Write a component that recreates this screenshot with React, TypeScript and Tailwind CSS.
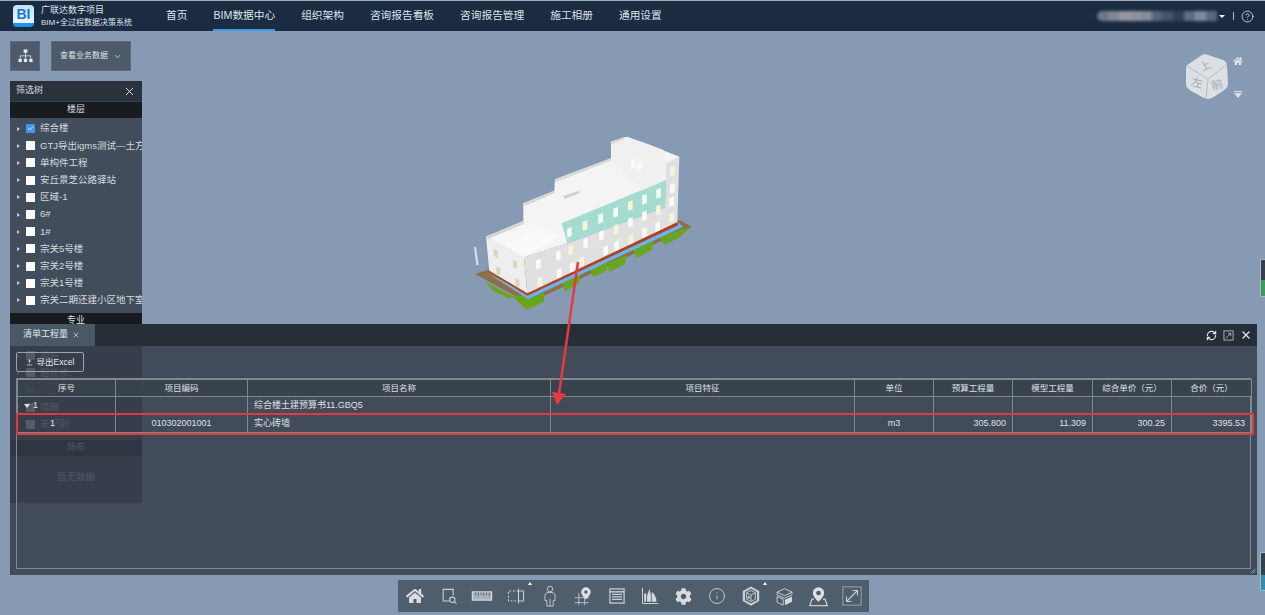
import { FaCog, FaHome } from 'react-icons/fa'
import { Check, ChevronDown, CircleHelp, Info, RefreshCw, X } from 'lucide-react'

const navItems = ['首页', 'BIM数据中心', '组织架构', '咨询报告看板', '咨询报告管理', '施工相册', '通用设置']

const floors = ['综合楼', 'GTJ导出igms测试—土方', '单构件工程', '安丘景芝公路驿站', '区域-1', '6#', '1#', '宗关5号楼', '宗关2号楼', '宗关1号楼', '宗关二期还建小区地下室']
const majors = ['钢筋', '粗装修', '其他', '措施', '未识别']

const blurColors = ['#6d7888', '#7f8896', '#9a95a3', '#8d93a0', '#858d9a', '#56657a', '#45556c', '#2f405a', '#5f6e84', '#808c9c', '#5a6980']

const windows = [
  [265, 432], [270, 485], [325, 407], [328, 460], [362, 390], [367, 442], [407, 370], [395, 425], [454, 347], [467, 392],
  [498, 328], [500, 378], [541, 307], [543, 358], [583, 288], [583, 338], [625, 270], [623, 320], [358, 337], [405, 317],
  [452, 295], [497, 277], [541, 257], [583, 238], [626, 220], [667, 153], [667, 205], [665, 245], [665, 293], [550, 130], [568, 137],
]
const sideWindows = [[137, 400], [145, 453], [195, 433], [202, 488]]

const Building = () => (
  <svg viewBox="0 0 780 600" className="absolute left-[450px] top-[89px] h-[200px] w-[260px]">
    <polygon points="72,382 78,380 86,434 79,436" fill="#d9dde0" />
    <polygon points="75,462 118,448 690,300 725,320 235,550" fill="#8f6f48" />
    <polygon points="108,486 190,530 180,538 125,510" fill="#6aa51f" />
    <polygon points="186,528 282,520 282,545 230,570" fill="#6aa51f" />
    <polygon points="335,485 392,462 388,490 345,514" fill="#6aa51f" />
    <polygon points="420,445 472,425 470,452 428,472" fill="#6aa51f" />
    <polygon points="472,430 530,405 525,432 478,456" fill="#6aa51f" />
    <polygon points="548,385 612,358 605,390 560,414" fill="#6aa51f" />
    <polygon points="628,352 690,330 725,320 680,358 642,374" fill="#6aa51f" />
    <polygon points="112,460 235,537 700,320 680,305 232,520" fill="#6cb2ee" />
    <polygon points="118,456 232,527 684,316 682,306 232,518 120,450" fill="#b3421c" />
    {/* silhouette behind the roofs */}
    <polygon points="108,350 220,303 220,250 313,212 315,178 483,115 483,65 530,50 600,75 688,110 648,180 352,370 222,412" fill="#f4f4f4" />
    <polygon points="108,350 222,412 232,520 118,452" fill="#eeeeee" />
    <polygon points="222,412 352,370 645,262 648,128 688,110 682,306 232,520" fill="#e0e0e0" />
    <polygon points="335,310 648,180 645,262 352,370" fill="#a5dcd2" />
    <polygon points="108,350 222,303 335,345 222,412" fill="#f6f6f6" />
    <polygon points="483,65 530,50 600,75 640,90 648,130 648,180 578,210 483,120" fill="#f0f0f0" />
    <polygon points="165,375 250,330 335,345 222,412" fill="#fafafa" />
    <polygon points="108,350 222,303 222,312 112,358" fill="#d5d5d5" />
    <polygon points="220,250 313,212 313,220 224,258" fill="#d8d8d8" />
    <polygon points="315,178 483,115 483,122 318,186" fill="#d8d8d8" />
    <polygon points="340,228 388,212 390,220 344,236" fill="#cfcfcf" />
    <polygon points="483,65 522,52 522,58 486,72" fill="#d8d8d8" />
    {windows.map(([x, y], i) => (
      <polygon key={i} points={`${x - 7},${y - 11} ${x + 7},${y - 16} ${x + 7},${y + 11} ${x - 7},${y + 16}`} fill={i % 3 === 1 ? '#f5f3d8' : '#fafaf4'} />
    ))}
    {sideWindows.map(([x, y], i) => (
      <polygon key={i} points={`${x - 6},${y - 14} ${x + 6},${y - 8} ${x + 6},${y + 14} ${x - 6},${y + 8}`} fill="#d8d6b8" />
    ))}
  </svg>
)

const NavCube = () => (
  <svg viewBox="0 0 60 60" preserveAspectRatio="none" className="absolute right-[28px] top-[18px] h-[55px] w-[60px]">
    <path d="M30 6 L46 12 Q50 14 50 18 L51 38 Q51 42 47 45 L36 53 Q31 56 26 53 L13 45 Q9 42 9 38 L9 22 Q9 18 12 16 L24 7 Q27 5 30 6Z" fill="#dbe0e4" />
    <path d="M11 19 L31 33 L50 17 M31 33 L29 54" fill="none" stroke="#a9b2bb" strokeWidth="0.8" />
    <text x="30" y="22" fontSize="11" textAnchor="middle" fill="#a3abb3" transform="rotate(-25 30 22)">上</text>
    <text x="19" y="41" fontSize="12" textAnchor="middle" fill="#a3abb3" transform="rotate(15 19 41)">左</text>
    <text x="41" y="43" fontSize="12" textAnchor="middle" fill="#a3abb3" transform="rotate(-15 41 43)">前</text>
  </svg>
)

const ic = { className: 'h-[20px] w-[20px]', viewBox: '0 0 24 24', fill: 'none', stroke: '#c9ced3', strokeWidth: 1.3 }

const ToolIcons = [
  <FaHome key="home" className="h-[16px] w-[18px] text-[#d8dcdf]" />,
  <svg key="zoom" {...ic}>
    <path d="M17 11V4H5v14h7" />
    <circle cx="16" cy="16.5" r="3.2" />
    <path d="M18.5 19l2.5 2.5" />
  </svg>,
  <svg key="ruler" {...ic} className="h-[22px] w-[22px]">
    <rect x="1.500" y="7.500" width="21" height="9" fill="#aab2b9" stroke="#d5d9dd" strokeWidth="1.300" />
    <path d="M5 8v3M8 8v4M11 8v3M14 8v4M17 8v3M20 8v4" stroke="#4f5e6c" strokeWidth="0.900" />
  </svg>,
  <svg key="section" {...ic}>
    <path d="M15 6H3v12h12" strokeDasharray="2.4 2" />
    <path d="M15 3v18M15 6h6v12h-6" />
  </svg>,
  <svg key="person" {...ic} strokeWidth={1} className="h-[22px] w-[22px]">
    <circle cx="12" cy="4.500" r="3" />
    <path d="M6.500 11c0-2 2.300-3 5.500-3s5.500 1 5.500 3v6h-2v6h-7v-6h-2zM12 15v8" />
  </svg>,
  <svg key="pin" {...ic}>
    <path d="M2 14h17M2 20h17M7 8v15M14 13v10" strokeWidth="1" />
    <path d="M15.500 1.500a5.700 5.700 0 0 0-5.700 5.700c0 3.800 5.700 9 5.700 9s5.700-5.200 5.700-9a5.700 5.700 0 0 0-5.700-5.700zm0 3.700a2 2 0 1 1 0 4 2 2 0 0 1 0-4z" fill="#dde0e3" stroke="none" />
  </svg>,
  <svg key="table" {...ic}>
    <rect x="3.500" y="3.500" width="17" height="17" strokeWidth="1.500" />
    <path d="M3.500 7h17" strokeWidth="1.800" />
    <path d="M6 10h12M6 13h12M6 16h12" strokeWidth="1.500" />
  </svg>,
  <svg key="chart" {...ic}>
    <path d="M3 2v19h19" strokeWidth="1.200" />
    <path d="M5 19V9h2.500v10zM8.500 19V12L11 4l2 6v9zM14 19V7l3 3 2.500 5v4z" fill="#d5d9dd" stroke="none" />
  </svg>,
  <FaCog key="cog" className="h-[17px] w-[17px] text-[#d8dcdf]" />,
  <Info key="info" className="h-[18px] w-[18px] text-[#c9ced3]" strokeWidth={1.200} />,
  <svg key="cube" {...ic} className="h-[22px] w-[22px]">
    <path d="M12 1.500l9 5v11l-9 5-9-5v-11z" fill="#c9ced3" stroke="none" />
    <path d="M12 4l6.500 3.500v9L12 20l-6.500-3.500v-9z" fill="#4f5e6c" stroke="none" />
    <path d="M12 6l4.800 2.500v7L12 18l-4.800-2.500v-7zM7.200 8.500L12 11l4.800-2.500M12 11v7" strokeWidth="1" />
    <rect x="8.500" y="12" width="2" height="3" fill="#c9ced3" stroke="none" />
  </svg>,
  <svg key="box" {...ic} className="h-[21px] w-[21px]">
    <path d="M12 3l8.500 4v3L12 14 3.500 10V7zM3.500 7L12 11l8.500-4" strokeWidth="1.100" />
    <path d="M3.500 12l7 3.300V22l-7-3.500z" strokeWidth="1.100" />
    <path d="M20.500 12l-8 3.800V22l8-4z" fill="#d5d9dd" stroke="none" />
  </svg>,
  <svg key="mappin" {...ic} className="h-[21px] w-[21px]">
    <path d="M12 1.500a6.500 6.500 0 0 0-6.500 6.500c0 4.300 6.500 10 6.500 10s6.500-5.700 6.500-10A6.500 6.500 0 0 0 12 1.500zm0 3.800a2.700 2.700 0 1 1 0 5.400 2.700 2.700 0 0 1 0-5.400z" fill="#dde0e3" stroke="none" />
    <path d="M7 15H4.500L2 22.500h20L19.500 15H17" strokeWidth="1.400" />
  </svg>,
  <svg key="expand" {...ic} className="h-[22px] w-[22px]">
    <rect x="2" y="2" width="20" height="20" stroke="#8c98a4" strokeWidth="1.300" />
    <path d="M6 18L18 6M12.500 6H18v5.500M6 12.500V18h5.500" strokeWidth="1.200" />
  </svg>,
]

const FilterRow = ({ label, checked }: { label: string; checked?: boolean }) => (
  <div className="flex h-[17.2px] items-center whitespace-nowrap pl-[7px] text-[9.500px] text-[#d6dade]">
    <span className="mr-[6px] h-0 w-0 border-y-[2.500px] border-l-[3px] border-y-transparent border-l-[#c3c8cd]" />
    {checked ? (
      <span className="mr-[5px] flex h-[9px] w-[9px] shrink-0 items-center justify-center bg-[#3f97ef]">
        <Check className="h-[7px] w-[7px] text-white" strokeWidth={3} />
      </span>
    ) : (
      <span className="mr-[5px] h-[9px] w-[9px] shrink-0 bg-white" />
    )}
    {label}
  </div>
)

const SectionHead = ({ label }: { label: string }) => (
  <div className="flex h-[16px] items-center justify-center bg-[#181c20] text-[9px] text-[#d8dcdf]">{label}</div>
)

const FilterTree = () => (
  <div className="mt-[10px] flex h-[422px] w-[132px] flex-col overflow-hidden bg-[#3e4957]/95">
    <div className="flex h-[21px] shrink-0 items-center justify-between border-b border-[#3a424c] bg-[#2a323b] px-[6px] text-[9px] text-[#d8dcdf]">
      筛选树
      <X className="h-[13px] w-[13px] text-white" strokeWidth={1.500} />
    </div>
    <SectionHead label="楼层" />
    <div className="pb-[4px] pt-[2px]">
      {floors.map((f, i) => (
        <FilterRow key={f} label={f} checked={i === 0} />
      ))}
    </div>
    <SectionHead label="专业" />
    <div className="pb-[7px] pt-[18px]">
      {majors.map((m) => (
        <FilterRow key={m} label={m} />
      ))}
    </div>
    <SectionHead label="场布" />
    <div className="pt-[14px] text-center text-[9.500px] text-[#d6dade]">暂无数据</div>
  </div>
)

const cell = 'h-[18px] border border-[#7f8a90] px-[6px] text-[9px] text-[#dfe2e5]'
const head = 'h-[17px] border border-[#7f8a90] bg-[#38424c]/90 text-center text-[8.500px] font-normal text-[#dfe2e5]'

const columns = ['序号', '项目编码', '项目名称', '项目特征', '单位', '预算工程量', '模型工程量', '综合单价（元）', '合价（元）']
const widths = ['w-[98px]', 'w-[132px]', 'w-[303px]', 'w-[304px]', 'w-[79px]', 'w-[79px]', 'w-[80px]', 'w-[79px]', 'w-[80px]']

const QuantityTable = () => (
  <div className="mt-[6px] h-[191px] border border-[#7f8a90]">
    <table className="w-full table-fixed border-collapse">
      <colgroup>
        {widths.map((w, i) => (
          <col key={i} className={w} />
        ))}
      </colgroup>
      <thead>
        <tr>
          {columns.map((c) => (
            <th key={c} className={head}>{c}</th>
          ))}
        </tr>
      </thead>
      <tbody>
        <tr>
          <td className={cell}>
            <span className="inline-flex items-center gap-[3px]">
              <span className="h-0 w-0 border-x-[3.500px] border-t-[4px] border-x-transparent border-t-[#dfe2e5]" />
              1
            </span>
          </td>
          <td className={cell} />
          <td className={cell}>综合楼土建预算书11.GBQ5</td>
          <td className={cell} />
          <td className={cell} />
          <td className={cell} />
          <td className={cell} />
          <td className={cell} />
          <td className={cell} />
        </tr>
        <tr>
          <td className={`${cell} pl-[32px]`}>1</td>
          <td className={`${cell} text-center`}>010302001001</td>
          <td className={cell}>实心砖墙</td>
          <td className={cell} />
          <td className={`${cell} text-center`}>m3</td>
          <td className={`${cell} text-right`}>305.800</td>
          <td className={`${cell} text-right`}>11.309</td>
          <td className={`${cell} text-right`}>300.25</td>
          <td className={`${cell} text-right`}>3395.53</td>
        </tr>
      </tbody>
    </table>
  </div>
)

const BottomPanel = () => (
  <div className="absolute left-[10px] top-[293px] h-[251px] w-[1247px] bg-[#343c48]/[0.84]">
    <div className="flex h-[22px] items-stretch justify-between bg-[#262e38]">
      <div className="flex w-[85px] items-center gap-[4px] bg-[#4a5866] pl-[13px] text-[9px] text-[#e3e6e9]">
        清单工程量
        <X className="h-[8px] w-[8px]" />
      </div>
      <div className="flex items-center gap-[6px] pr-[5px] text-[#e3e6e9]">
        <RefreshCw className="h-[11px] w-[11px]" strokeWidth={2.500} />
        <svg viewBox="0 0 12 12" className="h-[11px] w-[11px]" fill="none" stroke="#aeb5bb" strokeWidth="1">
          <rect x="1" y="1" width="10" height="10" />
          <path d="M3 9l5-5M5.500 3.500H8.500V6.500" />
        </svg>
        <X className="h-[12px] w-[12px]" strokeWidth={2.500} />
      </div>
    </div>
    <div className="px-[6px] pt-[6px]">
      <button className="flex h-[20px] w-[68px] items-center justify-center gap-[4px] rounded-[2px] border border-[#9aa3ab] text-[8.500px] text-[#e3e6e9]">
        <svg viewBox="0 0 10 10" className="h-[7px] w-[7px]" fill="none" stroke="#e3e6e9" strokeWidth="1">
          <path d="M5 1v5M3 3.500L5 1l2 2.500M1 8.500h8" />
        </svg>
        导出Excel
      </button>
      <QuantityTable />
    </div>
    <svg viewBox="0 0 8 8" className="absolute bottom-[1px] right-[1px] h-[6px] w-[6px]" stroke="#aeb5bb" strokeWidth="1">
      <path d="M1 7l6-6M4 7l3-3M7 7v0" />
    </svg>
  </div>
)

export default function App() {
  return (
    <div className="relative flex h-[615px] w-[1265px] flex-col overflow-hidden bg-[#869bb3] [font-family:'Liberation_Sans','Noto_Sans_CJK_SC',sans-serif]">
      <header className="flex h-[31px] shrink-0 items-stretch border-t border-[#a3abb3] bg-[#1a2b42] text-[#dfe3e8]">
        <div className="ml-[13px] mt-[4px] flex h-[22px] w-[21px] items-center justify-center rounded-[4px] border-b-[4px] border-[#1f93e6] bg-gradient-to-b from-[#bfe3f7] to-[#e8f5fc] text-[14px] font-bold leading-none text-[#1579c8]">
          BI
        </div>
        <div className="ml-[7px] flex w-[125px] flex-col justify-center gap-[3px]">
          <span className="text-[9px] leading-[10px]">广联达数字项目</span>
          <span className="text-[8px] leading-[9px]">BIM+全过程数据决策系统</span>
        </div>
        <nav className="flex gap-[26px] text-[10.700px]">
          {navItems.map((n, i) => (
            <span key={n} className={`flex items-center whitespace-nowrap border-b-[2px] ${i === 1 ? 'border-[#3c9ae8]' : 'border-transparent'}`}>
              {n}
            </span>
          ))}
        </nav>
        <div className="ml-auto flex items-center pr-[11px]">
          <div className="flex h-[10px] w-[120px] overflow-hidden rounded-l-full blur-[1.500px]">
            {blurColors.map((c, i) => (
              <span key={i} className="h-full flex-1" style={{ backgroundColor: c }} />
            ))}
          </div>
          <span className="ml-[2px] h-0 w-0 border-x-[3px] border-t-[3px] border-x-transparent border-t-white" />
          <span className="ml-[8px] h-[8px] w-px bg-[#aeb7c0]" />
          <CircleHelp className="ml-[7px] h-[13px] w-[13px]" strokeWidth={1.500} />
        </div>
      </header>

      <main className="relative flex-1 px-[10px] pt-[10px]">
        <div className="flex gap-[11px]">
          <div className="flex h-[30px] w-[30px] items-center justify-center border border-[#5c6a79] bg-[#4c5a69]">
            <svg viewBox="0 0 16 14" className="h-[14px] w-[15px]" fill="#e8ebee">
              <rect x="6" y="0" width="4" height="3.500" />
              <rect x="0.500" y="10" width="3.500" height="3.500" />
              <rect x="6.250" y="10" width="3.500" height="3.500" />
              <rect x="12" y="10" width="3.500" height="3.500" />
              <path d="M7.600 3.500h.8V6.500H14v3.500h-.8V7.300H8.400V10h-.8V7.300H2.800V10H2V6.500h5.600z" />
            </svg>
          </div>
          <div className="flex h-[30px] w-[80px] items-center justify-center gap-[5px] border border-[#5c6a79] bg-[#4c5a69] text-[8px] text-[#dfe3e8]">
            查看业务数据
            <ChevronDown className="h-[9px] w-[9px]" />
          </div>
        </div>
        <FilterTree />
        <Building />
        <NavCube />
        <FaHome className="absolute right-[22px] top-[25px] h-[10px] w-[10px] text-[#dfe3e7]" />
        <div className="absolute right-[23px] top-[60px] flex flex-col items-center gap-[1px]">
          <span className="h-[1px] w-[8px] bg-[#dfe3e7]" />
          <span className="h-0 w-0 border-x-[4px] border-t-[5px] border-x-transparent border-t-[#dfe3e7]" />
        </div>
        <BottomPanel />
        <div className="absolute left-[398px] top-[549px] flex h-[32px] w-[471px] items-center bg-[#4f5e6c] px-[0.500px]">
          {ToolIcons.map((icon, i) => (
            <div key={i} className="relative flex h-full w-[33.700px] items-center justify-center">
              {icon}
              {(i === 3 || i === 10) && (
                <span className="absolute right-[1px] top-[2px] h-0 w-0 border-x-[2.500px] border-b-[3px] border-x-transparent border-b-white" />
              )}
            </div>
          ))}
        </div>
        <div className="absolute right-0 top-[228px] flex h-[38px] w-[5px] flex-col overflow-hidden rounded-l-[2px] border border-r-0 border-[#aab6c2]">
          <span className="h-[20px] bg-[#36404b]" />
          <span className="flex-1 bg-[#3d9a5f]" />
        </div>
        <div className="absolute right-0 top-[521px] flex h-[39px] w-[5px] flex-col overflow-hidden rounded-l-[2px] border border-r-0 border-[#aab6c2]">
          <span className="h-[22px] bg-[#36404b]" />
          <span className="flex-1 bg-[#2f8fb0]" />
        </div>

        {/* red markup drawn on the screenshot */}
        <div className="absolute left-[16px] top-[382px] h-[22px] w-[1238px] border-2 border-[#e23a3c]" />
        <svg viewBox="0 0 60 160" className="absolute left-[540px] top-[231px] h-[160px] w-[60px]">
          <path d="M38 0L19 132" stroke="#e8393f" strokeWidth="2.500" />
          <path d="M12 130L26 132L17 143z" fill="#e8393f" />
        </svg>
      </main>
    </div>
  )
}
